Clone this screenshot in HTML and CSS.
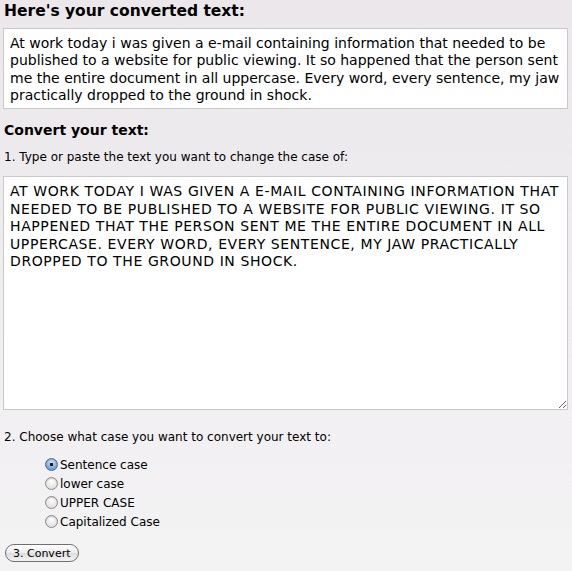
FILE: index.html
```html
<!DOCTYPE html>
<html lang="en">
<head>
    <meta charset="UTF-8">
    <title>Convert Case</title>
    <link rel="stylesheet" href="styles.css">
</head>

<body>
    <h2 class="result-title">Here's your converted text:</h2>
    <div class="result">At work today i was given a e-mail containing information that needed to be published to a website for public viewing. It so happened that the person sent me the entire document in all uppercase. Every word, every sentence, my jaw practically dropped to the ground in shock.</div>

    <form class="convert-form">
        <h3 class="form-title">Convert your text:</h3>
        <label class="step" for="source">1. Type or paste the text you want to change the case of:</label>
        <textarea id="source" name="source">AT WORK TODAY I WAS GIVEN A E-MAIL CONTAINING INFORMATION THAT NEEDED TO BE PUBLISHED TO A WEBSITE FOR PUBLIC VIEWING. IT SO HAPPENED THAT THE PERSON SENT ME THE ENTIRE DOCUMENT IN ALL UPPERCASE. EVERY WORD, EVERY SENTENCE, MY JAW PRACTICALLY DROPPED TO THE GROUND IN SHOCK.</textarea>

        <p class="step step-case">2. Choose what case you want to convert your text to:</p>
        <div class="options">
            <label class="option"><input type="radio" name="case" value="sentence" checked> Sentence case</label>
            <label class="option"><input type="radio" name="case" value="lower"> lower case</label>
            <label class="option"><input type="radio" name="case" value="upper"> UPPER CASE</label>
            <label class="option"><input type="radio" name="case" value="capitalized"> Capitalized Case</label>
        </div>

        <button type="submit" class="convert-btn">3. Convert</button>
    </form>
</body>
</html>
```

FILE: styles.css
```css
html {
    height: 100%;
}

body {
    font-family: Verdana, "DejaVu Sans", sans-serif;
    color: #000;
    margin: 0;
    padding: 0 4px 0 3px;
    min-height: 100%;
    background: linear-gradient(#ebe7eb, #f4f3f4);
}

.result-title {
    font-size: 15.5px;
    line-height: 23px;
    margin: 0 0 5px 1px;
}

.result {
    background-color: white;
    border: 1px solid #c9c9c9;
    font-size: 14px;
    line-height: 17.3px;
    padding: 6px 6px 4px;
}

.convert-form {
    margin: 0;
}

.form-title {
    font-size: 14px;
    line-height: 18px;
    margin: 12px 0 0 1px;
}

.step {
    display: block;
    font-size: 12px;
    line-height: 14px;
    margin: 11px 0 0 1px;
}

textarea {
    display: block;
    box-sizing: border-box;
    width: 100%;
    height: 234px;
    margin-top: 12px;
    padding: 6px 6px 4px;
    border: 1px solid #c9c9c9;
    font-family: Verdana, "DejaVu Sans", sans-serif;
    font-size: 14px;
    letter-spacing: 0.6px;
    line-height: 17.5px;
    background-color: white;
    resize: vertical;
}

.step-case {
    margin-top: 20px;
}

.options {
    display: flex;
    flex-direction: column;
    margin: 11px 0 0 42px;
}

.option {
    display: flex;
    align-items: center;
    font-size: 12px;
    height: 19px;
}

.option input {
    appearance: none;
    width: 13px;
    height: 13px;
    margin: 0 2px 0 0;
    border: 1px solid #8a8a8a;
    border-radius: 50%;
    background: radial-gradient(circle at 50% 30%, #ffffff, #d6d6d6);
    box-shadow: inset 0 1px 1px rgba(0, 0, 0, 0.15);
}

.option input:checked {
    border-color: #4a6f9c;
    background: radial-gradient(circle, #1b1b1b 0 1.5px, transparent 2px),
        radial-gradient(circle at 50% 30%, #d4e6f8, #6fa2d8 70%, #4b86c6);
}

.convert-btn {
    display: block;
    margin: 13px 0 0 2px;
    padding: 0 7px;
    height: 18px;
    font-family: Verdana, "DejaVu Sans", sans-serif;
    font-size: 11px;
    color: #000;
    border: 1px solid #707070;
    border-radius: 9px;
    background: linear-gradient(#ffffff, #ececec 50%, #dedede 51%, #f4f4f4);
    cursor: pointer;
}
```
